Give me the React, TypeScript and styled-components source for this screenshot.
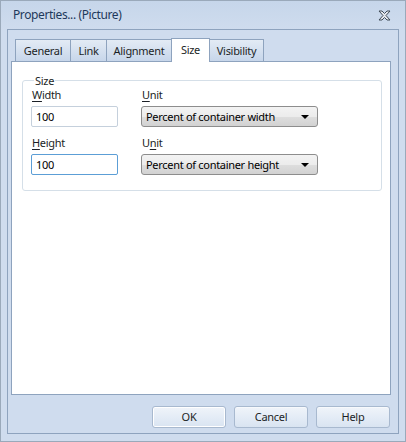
import React, { useState } from 'react';
import styled, { createGlobalStyle } from 'styled-components';

const GlobalStyle = createGlobalStyle`
  html, body {
    margin: 0;
    padding: 0;
    background: #cfdcee;
  }
  * {
    box-sizing: border-box;
  }
`;

const colors = {
  border: '#8ea3be',
  text: '#1b1f26',
  title: '#1e395b',
  tabTop: '#e3ebf5',
  tabBottom: '#c7d6ea',
};

const Window = styled.div`
  width: 406px;
  height: 442px;
  display: flex;
  flex-direction: column;
  border: 1px solid #9aa9ba;
  background: linear-gradient(to bottom, #c6d6ea 0px, #cfdcee 30px, #cfdcee 100%);
  font-family: 'Noto Sans', 'Open Sans', sans-serif;
  font-size: 11px;
  letter-spacing: -0.3px;
  color: ${colors.text};
`;

const TitleBar = styled.div`
  height: 28px;
  flex: none;
  display: flex;
  align-items: center;
  justify-content: space-between;
  padding: 0 14px 0 12px;
`;

const Caption = styled.span`
  font-size: 12px;
  letter-spacing: -0.4px;
  color: ${colors.title};
  padding-bottom: 1px;
`;

const Frame = styled.div`
  flex: 1;
  margin: 0 6px 7px 6px;
  border: 1px solid ${colors.border};
  display: flex;
  flex-direction: column;
  padding: 8px 7px 0 3px;
`;

const TabStrip = styled.div`
  display: flex;
  align-items: flex-end;
  padding-left: 4px;
  height: 23px;
  flex: none;
`;

const Tab = styled.div<{ $active?: boolean; $w: number }>`
  width: ${(p) => p.$w}px;
  height: ${(p) => (p.$active ? '24px' : '22px')};
  margin-right: -1px;
  display: flex;
  align-items: center;
  justify-content: center;
  border: 1px solid ${colors.border};
  border-bottom: none;
  background: ${(p) =>
    p.$active ? '#ffffff' : `linear-gradient(to bottom, ${colors.tabTop}, ${colors.tabBottom})`};
  position: relative;
  z-index: ${(p) => (p.$active ? 2 : 1)};
  margin-bottom: ${(p) => (p.$active ? '-1px' : '0')};
  padding-bottom: ${(p) => (p.$active ? '3px' : '0')};
  cursor: default;
  user-select: none;
`;

const Panel = styled.div`
  height: 334px;
  flex: none;
  background: #ffffff;
  border: 1px solid ${colors.border};
  padding: 12px 8px 0 10px;
`;

const Group = styled.fieldset`
  margin: 0;
  border: 1px solid #d5dfe8;
  border-radius: 3px;
  padding: 0 8px 15px 8px;
  height: 117px;
`;

const Legend = styled.legend`
  padding: 0 1px;
  margin-left: 3px;
  line-height: 13px;
`;

const FieldGrid = styled.div`
  display: grid;
  grid-template-columns: 110px 177px;
  row-gap: 8px;
`;

const Field = styled.div`
  display: flex;
  flex-direction: column;
  gap: 3px;
`;

const Label = styled.label`
  line-height: 16px;
  padding-left: 1px;
`;

const Key = styled.span`
  text-decoration: underline;
  text-underline-offset: 2px;
`;

const TextBox = styled.input<{ $focused?: boolean }>`
  width: 87px;
  height: 21px;
  border: 1px solid ${(p) => (p.$focused ? '#5c9ed6' : '#c5d0dc')};
  border-radius: 2px;
  padding: 0 4px;
  font-family: inherit;
  font-size: 11px;
  letter-spacing: inherit;
  color: #000;
  outline: none;
  background: #fff;
`;

const Select = styled.div`
  width: 177px;
  height: 21px;
  border: 1px solid #8d8d8d;
  border-radius: 3px;
  background: linear-gradient(to bottom, #f3f3f3 0%, #ececec 50%, #dedede 51%, #d2d2d2 100%);
  display: flex;
  align-items: center;
  justify-content: space-between;
  padding: 0 8px 0 4px;
  color: #000;
`;

const Arrow = styled.span`
  width: 0;
  height: 0;
  border-left: 4px solid transparent;
  border-right: 4px solid transparent;
  border-top: 4px solid #000;
`;

const ButtonRow = styled.div`
  display: flex;
  justify-content: flex-end;
  gap: 8px;
  padding-top: 11px;
  padding-right: 1px;
`;

const Button = styled.button<{ $default?: boolean }>`
  width: 74px;
  height: 22px;
  border: 1px solid #a8b9cf;
  border-radius: 3px;
  background: linear-gradient(to bottom, #f0f4fa 0%, #e4ecf6 50%, #d9e4f1 100%);
  box-shadow: ${(p) => (p.$default ? 'inset 0 0 0 1px #ffffff' : 'inset 0 1px 0 #f7f9fc')};
  font-family: inherit;
  font-size: 11px;
  letter-spacing: inherit;
  color: ${colors.text};
  padding: 0;
  padding-bottom: 1px;
`;

const CloseIcon = () => (
  <svg width="13" height="11" viewBox="0 0 13 11">
    <path
      d="M1 1 H4 L6.5 3.5 L9 1 H12 L8 5.5 L12 10 H9 L6.5 7.5 L4 10 H1 L5 5.5 Z"
      fill="#e6e9ee"
      stroke="#3f4a57"
      strokeWidth="1"
      strokeLinejoin="round"
    />
  </svg>
);

const tabs = [
  { name: 'General', width: 56 },
  { name: 'Link', width: 37 },
  { name: 'Alignment', width: 66 },
  { name: 'Size', width: 39 },
  { name: 'Visibility', width: 55 },
];

export default function App() {
  const [active, setActive] = useState('Size');
  return (
    <>
      <GlobalStyle />
      <Window>
        <TitleBar>
          <Caption>Properties... (Picture)</Caption>
          <CloseIcon />
        </TitleBar>
        <Frame>
          <TabStrip>
            {tabs.map((t) => (
              <Tab
                key={t.name}
                $w={t.width}
                $active={t.name === active}
                onClick={() => setActive(t.name)}
              >
                {t.name}
              </Tab>
            ))}
          </TabStrip>
          <Panel>
            <Group>
              <Legend>Size</Legend>
              <FieldGrid>
                <Field>
                  <Label>
                    <Key>W</Key>idth
                  </Label>
                  <TextBox defaultValue="100" />
                </Field>
                <Field>
                  <Label>
                    <Key>U</Key>nit
                  </Label>
                  <Select>
                    Percent of container width
                    <Arrow />
                  </Select>
                </Field>
                <Field>
                  <Label>
                    <Key>H</Key>eight
                  </Label>
                  <TextBox defaultValue="100" $focused />
                </Field>
                <Field>
                  <Label>
                    U<Key>n</Key>it
                  </Label>
                  <Select>
                    Percent of container height
                    <Arrow />
                  </Select>
                </Field>
              </FieldGrid>
            </Group>
          </Panel>
          <ButtonRow>
            <Button $default>OK</Button>
            <Button>Cancel</Button>
            <Button>Help</Button>
          </ButtonRow>
        </Frame>
      </Window>
    </>
  );
}
